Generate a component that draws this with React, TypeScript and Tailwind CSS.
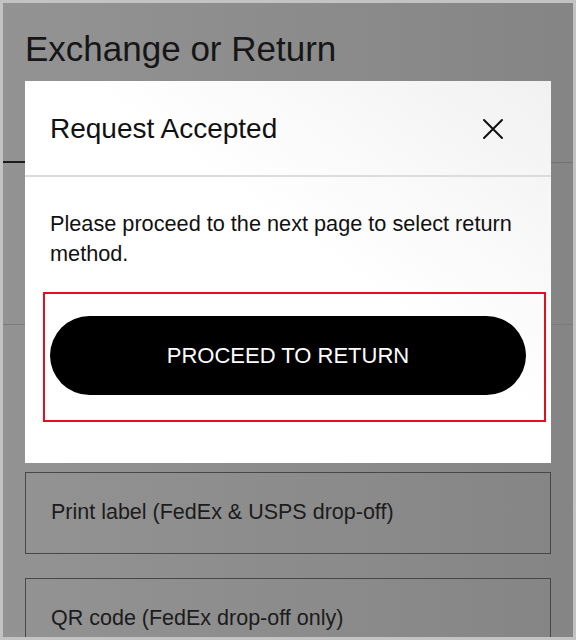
import React from 'react';

const font = { fontFamily: '"Liberation Sans", Arial, Helvetica, sans-serif' };

// 閉じるボタンのアイコン
const CloseIcon = () => (
    <svg width="22" height="22" viewBox="0 0 22 22" fill="none">
        <path d="M2 2 L20 20 M20 2 L2 20" stroke="#111" strokeWidth="2" strokeLinecap="round" />
    </svg>
);

const MethodBox = ({ label }: { label: string }) => (
    <div className="h-[82px] border border-[#474747] flex items-center px-[25px]">
        <span className="text-[21.5px] text-[#1c1c1c] leading-none">{label}</span>
    </div>
);

export default function App() {
    return (
        <div
            style={font}
            className="relative w-[576px] h-[640px] overflow-hidden border-[3px] border-[#c3c3c3] bg-linear-to-r from-[#939393] via-[#8c8c8c] to-[#858585]"
        >
            {/* 背景ページ（モーダルの下） */}
            <div className="pt-[26px]">
                <h1 className="px-[22px] text-[35px] leading-[40px] text-[#161616]">Exchange or Return</h1>
                <div className="flex h-[94px]">
                    <div className="flex-1 border-b-2 border-[#1a1a1a]"></div>
                    <div className="flex-1 border-b border-[#727272]"></div>
                </div>
                <div className="h-[162px] border-b border-[#7a7a7a]"></div>
                <div className="px-[22px] pt-[147px] flex flex-col gap-[24px]">
                    <MethodBox label="Print label (FedEx & USPS drop-off)" />
                    <MethodBox label="QR code (FedEx drop-off only)" />
                </div>
            </div>

            {/* モーダル */}
            <div className="absolute left-[22px] top-[78px] w-[526px] bg-linear-to-bl from-[#f1f1f1] via-white via-45% to-white">
                <div className="h-[96px] border-b-2 border-[#dcdcdc] flex items-center justify-between pl-[25px] pr-[47px] pt-[2px]">
                    <span className="text-[28px] leading-none text-[#111]">Request Accepted</span>
                    <button className="flex items-center justify-center">
                        <CloseIcon />
                    </button>
                </div>
                <div className="px-[25px] pt-[32px] pb-[68px]">
                    <p className="text-[21.7px] leading-[30px] text-[#111]">
                        Please proceed to the next page to select return method.
                    </p>
                    <button className="mt-[47px] w-full h-[79px] rounded-full bg-black text-white text-[22px] tracking-normal">
                        PROCEED TO RETURN
                    </button>
                </div>
                {/* 注目枠 */}
                <div className="absolute left-[18px] top-[211px] w-[503px] h-[130px] border-2 border-[#e0101c] pointer-events-none"></div>
            </div>
        </div>
    );
}
